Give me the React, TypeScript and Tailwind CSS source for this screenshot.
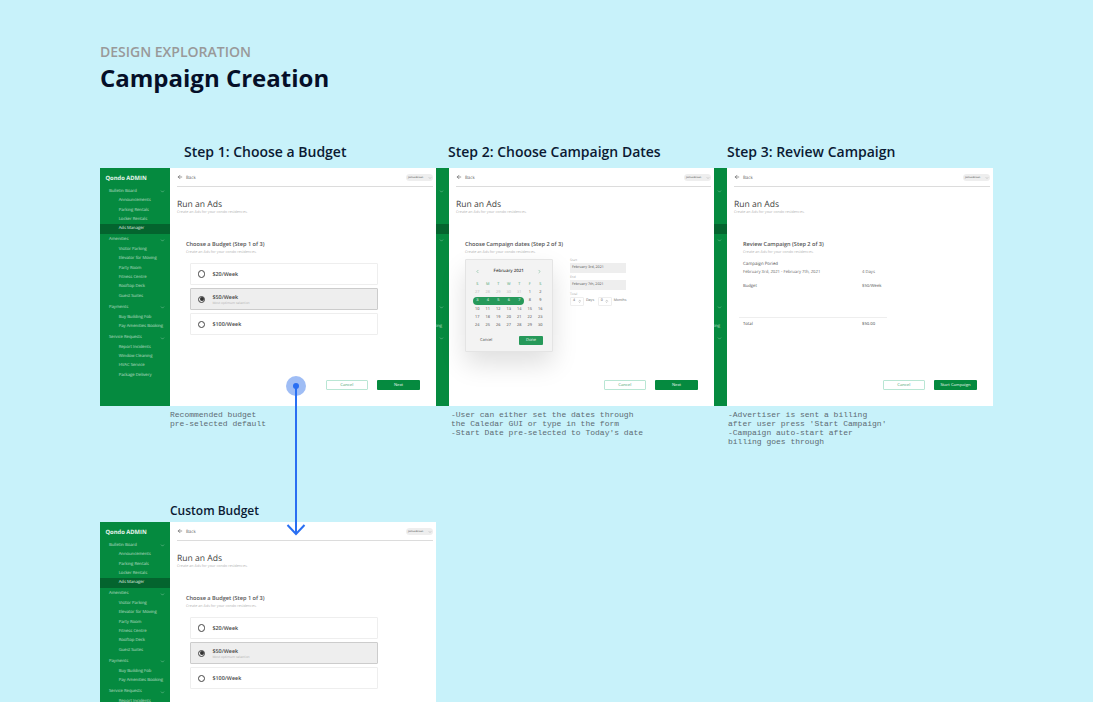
import type { ReactNode } from "react";
import { ArrowLeft, ChevronDown, ChevronLeft, ChevronRight, ChevronsUpDown } from "lucide-react";

const menu = [
  { title: "Bulletin Board", items: ["Announcements", "Parking Rentals", "Locker Rentals", "Ads Manager"] },
  { title: "Amenities", items: ["Visitor Parking", "Elevator for Moving", "Party Room", "Fitness Centre", "Rooftop Deck", "Guest Suites"] },
  { title: "Payments", items: ["Buy Building Fob", "Pay Amenities Booking"] },
  { title: "Service Requests", items: ["Report Incidents", "Window Cleaning", "HVAC Service", "Package Delivery"] },
];

const days = [
  27, 28, 29, 30, 31, 1, 2,
  3, 4, 5, 6, 7, 8, 9,
  10, 11, 12, 13, 14, 15, 16,
  17, 18, 19, 20, 21, 22, 23,
  24, 25, 26, 27, 28, 29, 30,
];

function Sidebar({ clipped }: { clipped?: boolean }) {
  return (
    <aside className={`w-[70px] shrink-0 bg-[#058a3f] text-white ${clipped ? "-ml-[57px]" : ""}`}>
      <div className="pl-[5.5px] pt-[5.5px] text-[5.8px] leading-[8px] font-bold whitespace-nowrap text-white/90">Qondo ADMIN</div>
      <div className="mt-[1.5px] flex flex-col gap-[2.2px] pt-[4px]">
        {menu.map((group) => (
          <div key={group.title}>
            <div className="flex h-[9.3px] items-center justify-between pl-[9px] pr-[5.5px] text-[4.2px] text-white/65 whitespace-nowrap">
              {group.title}
              <ChevronDown className="h-[5px] w-[5px]" />
            </div>
            {group.items.map((item) => (
              <div
                key={item}
                className={`h-[9.33px] pl-[18.7px] text-[4.2px] leading-[9.33px] whitespace-nowrap ${item === "Ads Manager" ? "bg-[#04642e] text-white/85" : "text-white/65"}`}
              >
                {item}
              </div>
            ))}
          </div>
        ))}
      </div>
    </aside>
  );
}

function StepHead({ title }: { title: string }) {
  return (
    <>
      <div className="text-[5.6px] leading-[8px] font-semibold text-[#555555] whitespace-nowrap">{title}</div>
      <div className="mt-[1.5px] text-[3.7px] leading-[5px] text-[#b4b4b4] whitespace-nowrap">Create an Ads for your condo residences.</div>
    </>
  );
}

function Frame({ width, clipped, action, children }: { width: string; clipped?: boolean; action: string; children: ReactNode }) {
  return (
    <div className={`flex h-[238px] overflow-hidden bg-white [text-rendering:geometricPrecision] ${width}`}>
      <Sidebar clipped={clipped} />
      <main className="flex min-w-0 flex-1 flex-col">
        <div className="ml-[7px] mr-[3px] flex h-[19px] shrink-0 items-center justify-between border-b border-[#dcdcdc] pt-[1px]">
          <div className="flex items-center gap-[3px] text-[4.4px] text-[#666]">
            <ArrowLeft className="h-[6px] w-[6px] text-[#333]" />
            <span className="pt-[1px]">Back</span>
          </div>
          <div className="flex h-[7.5px] w-[27.5px] items-center justify-between rounded-full bg-[#eeeeee] pl-[2.5px] pr-[1.5px] text-[2.3px] font-semibold text-[#666] whitespace-nowrap">
            Joshua Brown
            <ChevronDown className="h-[4px] w-[4px] text-[#888]" />
          </div>
        </div>
        <h2 className="ml-[7px] mt-[12px] text-[8.6px] leading-[10px] text-[#444] whitespace-nowrap">Run an Ads</h2>
        <p className="ml-[7px] mt-[1px] text-[3.7px] leading-[5px] text-[#b4b4b4] whitespace-nowrap">Create an Ads for your condo residences.</p>
        <div className="ml-[16px] mt-[25px]">{children}</div>
        <div className="mb-[16px] mr-[16px] mt-auto flex justify-end gap-[9px] text-[4.2px]">
          <button className="h-[10px] w-[42.5px] rounded-[1px] border-[1.5px] border-[#b9e6d4] text-[#3fa270]">Cancel</button>
          <button className="h-[10px] w-[43px] rounded-[1px] bg-[#058a3f] text-white/90 whitespace-nowrap">{action}</button>
        </div>
      </main>
    </div>
  );
}

function BudgetOption({ label, hint, selected }: { label: string; hint?: string; selected?: boolean }) {
  return (
    <div
      className={`flex h-[22.3px] items-center rounded-[1px] border pl-[7px] ${selected ? "border-[#cccccc] bg-[#eeeeee]" : "border-[#eeeeee] bg-white"}`}
    >
      <span className="flex h-[7.4px] w-[7.4px] shrink-0 items-center justify-center rounded-full border-[0.7px] border-[#444]">
        {selected && <span className="h-[4px] w-[4px] rounded-full bg-[#333]" />}
      </span>
      <div className="ml-[7px]">
        <div className="text-[5.4px] leading-[7px] font-semibold text-[#444]">{label}</div>
        {hint && <div className="text-[3.3px] leading-[3.5px] text-[#b4b4b4]">{hint}</div>}
      </div>
    </div>
  );
}

function BudgetStep() {
  return (
    <>
      <StepHead title="Choose a Budget (Step 1 of 3)" />
      <div className="ml-[4px] mt-[8.5px] flex w-[188px] flex-col gap-[2.8px]">
        <BudgetOption label="$20/Week" />
        <BudgetOption label="$50/Week" hint="Most optimum selection" selected />
        <BudgetOption label="$100/Week" />
      </div>
    </>
  );
}

function Calendar() {
  return (
    <div className="h-[93px] w-[87.5px] shrink-0 rounded-[1px] border border-[#e4e4e4] bg-[#f3f3f3] shadow-[0_12px_26px_rgba(0,0,0,0.13)]">
      <div className="mx-[9px] mt-[7px] flex h-[8px] items-center justify-between text-[4.4px] font-semibold text-[#444]">
        <ChevronLeft className="h-[5px] w-[5px] text-[#3f9f6c]" />
        February 2021
        <ChevronRight className="h-[5px] w-[5px] text-[#3f9f6c]" />
      </div>
      <div className="ml-[6px] mt-[5.5px] grid w-[73.5px] grid-cols-7 text-center text-[3.8px] leading-[8.3px] text-[#3f9f6c]">
        {["S", "M", "T", "W", "T", "F", "S"].map((d, i) => (
          <span key={i}>{d}</span>
        ))}
      </div>
      <div className="relative ml-[6px] grid w-[73.5px] grid-cols-7 text-center text-[3.9px] leading-[8.4px] text-[#444]">
        <span className="absolute left-[1.2px] top-[8.4px] h-[7.4px] w-[51px] rounded-full bg-[#26995a]" />
        {days.map((d, i) => (
          <span key={i} className={`relative ${i < 5 ? "text-[#bbbbbb]" : i >= 7 && i < 12 ? "text-white" : ""}`}>
            {d}
          </span>
        ))}
      </div>
      <div className="ml-[14px] mr-[8.5px] mt-[5px] flex items-center justify-between text-[4px] text-[#444]">
        Cancel
        <span className="flex h-[9.5px] w-[24px] items-center justify-center rounded-[1px] bg-[#26995a] text-white/90">Done</span>
      </div>
    </div>
  );
}

function DateField({ label, value }: { label: string; value: string }) {
  return (
    <>
      <div className="text-[3.2px] leading-[4.5px] text-[#aaaaaa]">{label}</div>
      <div className="mb-[2.5px] flex h-[10px] w-[56px] items-center bg-[#eeeeee] pl-[2px] text-[3.6px] text-[#555] whitespace-nowrap">{value}</div>
    </>
  );
}

function NumberBox({ value }: { value: number }) {
  return (
    <span className="flex h-[9px] w-[14px] items-center justify-between rounded-[1px] border border-[#eeeeee] px-[2px] text-[3.6px] text-[#555]">
      {value}
      <ChevronsUpDown className="h-[4.5px] w-[3.5px] text-[#555]" />
    </span>
  );
}

function DatesStep() {
  return (
    <>
      <StepHead title="Choose Campaign dates (Step 2 of 3)" />
      <div className="mt-[4.5px] flex gap-[17.5px]">
        <Calendar />
        <div className="-mt-[1px]">
          <DateField label="Start" value="February 3rd, 2021" />
          <DateField label="End" value="February 7th, 2021" />
          <div className="mt-[1.5px] text-[3.2px] leading-[4.5px] text-[#aaaaaa]">Total</div>
          <div className="flex items-center gap-[2px] text-[3.6px] text-[#666]">
            <NumberBox value={4} />
            <span className="mr-[1.5px]">Days</span>
            <NumberBox value={0} />
            <span>Months</span>
          </div>
        </div>
      </div>
    </>
  );
}

function ReviewStep() {
  return (
    <>
      <StepHead title="Review Campaign (Step 2 of 3)" />
      <div className="mt-[6px] text-[4.4px] leading-[6px] text-[#555]">Campaign Poried</div>
      <div className="mt-[3px] grid grid-cols-[119px_1fr] text-[4.2px] leading-[6px] text-[#666] whitespace-nowrap">
        <span>February 3rd, 2021 - February 7th, 2021</span>
        <span>4 Days</span>
      </div>
      <div className="mt-[8px] grid grid-cols-[119px_1fr] text-[4.2px] leading-[6px] text-[#555]">
        <span>Budget</span>
        <span>$50/Week</span>
      </div>
      <div className="-ml-[4.5px] mt-[27px] w-[148.5px] border-t border-[#eeeeee]" />
      <div className="mt-[4.5px] grid grid-cols-[119px_1fr] text-[4.2px] leading-[6px] text-[#444]">
        <span>Total</span>
        <span>$50.00</span>
      </div>
    </>
  );
}

function Note({ lines, indent }: { lines: string[]; indent: string }) {
  return (
    <div className={`mt-[4px] h-[36px] font-['Liberation_Mono',monospace] text-[8px] leading-[9px] text-[#5d6b73] whitespace-pre ${indent}`}>
      {lines.join("\n")}
    </div>
  );
}

function StepTitle({ children, indent }: { children: ReactNode; indent: string }) {
  return <h3 className={`mb-[6px] h-[20px] text-[14px] leading-[20px] font-semibold text-[#0b1a33] whitespace-nowrap ${indent}`}>{children}</h3>;
}

export default function App() {
  return (
    <div className="relative h-[702px] w-[1093px] overflow-hidden bg-[#c8f2fa] pl-[100px] pt-[42px] font-['Open_Sans',sans-serif]">
      <p className="text-[14px] leading-[20px] font-semibold text-[#999999]">DESIGN EXPLORATION</p>
      <h1 className="text-[24px] leading-[32px] font-bold text-[#050f28]">Campaign Creation</h1>

      <div className="mt-[48px] flex">
        <section className="w-[336px]">
          <StepTitle indent="ml-[84px]">Step 1: Choose a Budget</StepTitle>
          <Frame width="w-[336px]" action="Next">
            <BudgetStep />
          </Frame>
          <Note indent="ml-[70px]" lines={["Recommended budget", "pre-selected default"]} />
        </section>
        <section className="w-[278px]">
          <StepTitle indent="ml-[12px]">Step 2: Choose Campaign Dates</StepTitle>
          <Frame width="w-[278px]" clipped action="Next">
            <DatesStep />
          </Frame>
          <Note
            indent="ml-[15px]"
            lines={["-User can either set the dates through", "the Caledar GUI or type in the form", "-Start Date pre-selected to Today's date"]}
          />
        </section>
        <section className="w-[279px]">
          <StepTitle indent="ml-[13px]">Step 3: Review Campaign</StepTitle>
          <Frame width="w-[279px]" clipped action="Start Campaign">
            <ReviewStep />
          </Frame>
          <Note
            indent="ml-[14px]"
            lines={["-Advertiser is sent a billing", "after user press 'Start Campaign'", "-Campaign auto-start after", "billing goes through"]}
          />
        </section>
      </div>

      <section className="mt-[57px] w-[336px]">
        <h3 className="mb-[3px] ml-[70px] h-[16px] text-[12px] leading-[16px] font-semibold text-[#0b1a33]">Custom Budget</h3>
        <Frame width="w-[336px]" action="Next">
          <BudgetStep />
        </Frame>
      </section>

      {/* prototype link from the selected budget to the custom budget frame */}
      <svg className="absolute left-[284px] top-[374px] h-[164px] w-[24px]" viewBox="0 0 24 164" fill="none">
        <circle cx="12" cy="12" r="10" fill="#9fbdf5" />
        <circle cx="12" cy="12" r="3" fill="#2a6ff2" />
        <path d="M12 12V160M3.5 151L12 160L20.5 151" stroke="#2a6ff2" strokeWidth="2" />
      </svg>
    </div>
  );
}
